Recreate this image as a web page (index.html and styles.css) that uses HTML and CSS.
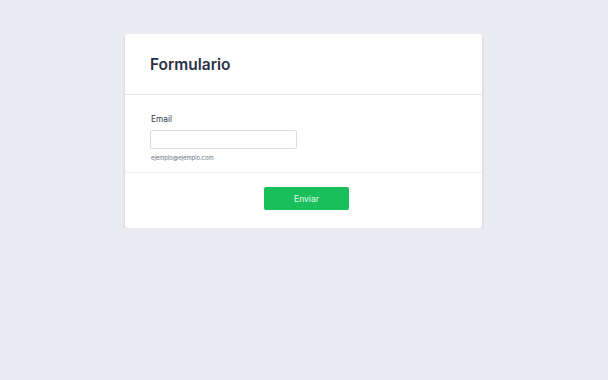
FILE: index.html
```html
<!DOCTYPE html>
<html lang="es">
<head>
  <meta charset="UTF-8" />
  <title>Formulario</title>
  <link rel="stylesheet" href="styles.css">
</head>
<body>
  <div class="card">
    <div class="card-header">
      <h1>Formulario</h1>
    </div>
    <form class="card-body">
      <label for="email">Email</label>
      <input type="email" id="email" name="email" />
      <p class="help">ejemplo@ejemplo.com</p>
    </form>
    <div class="card-footer">
      <button type="submit">Enviar</button>
    </div>
  </div>
</body>
</html>
```

FILE: styles.css
```css
body {
  margin: 0;
  background: #ebecf1;
  font-family: Inter, "Noto Sans", sans-serif;
  padding-top: 34px;
}

.card {
  width: 357px;
  margin-left: 125px;
  background: #fff;
  border-radius: 2px;
  box-shadow: 0 2px 3px rgba(30, 40, 80, 0.2);
}

.card-header {
  height: 60px;
  padding: 0 25px;
  display: flex;
  align-items: center;
  border-bottom: 1px solid #e6e7eb;
}

.card-header h1 {
  margin: 0;
  font-size: 15.5px;
  font-weight: 600;
  color: #2b3146;
}

.card-body {
  padding: 19px 25px 0;
  height: 58px;
  border-bottom: 1px solid #f0f1f3;
}

label {
  display: block;
  font-size: 8.3px;
  color: #3a4050;
  margin-bottom: 6px;
  padding-left: 1px;
}

input {
  display: block;
  box-sizing: border-box;
  width: 147px;
  height: 19px;
  margin: 0;
  border: 1px solid #d9dce2;
  border-radius: 2px;
  background: #fff;
}

.help {
  margin: 5px 0 0;
  font-size: 5.8px;
  color: #6b7080;
  padding-left: 1px;
}

.card-footer {
  display: flex;
  justify-content: center;
  padding: 14px 0 18px 6px;
}

button {
  width: 85px;
  height: 23px;
  border: none;
  border-radius: 2px;
  background: #18bf5b;
  color: #e8fbef;
  font-family: inherit;
  font-size: 8.5px;
  cursor: pointer;
}
```
